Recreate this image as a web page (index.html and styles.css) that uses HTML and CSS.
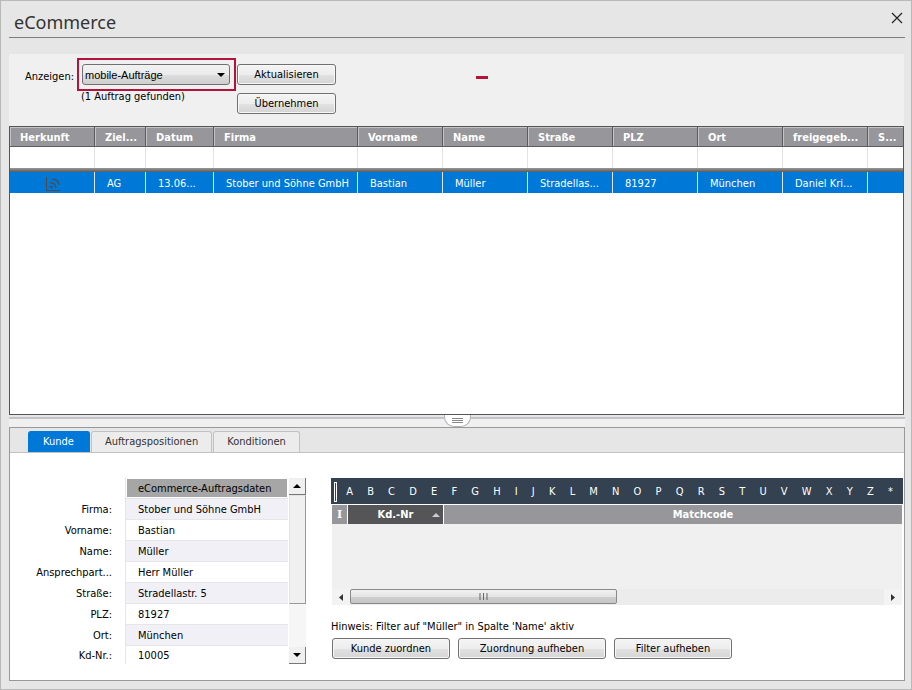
FILE: index.html
```html
<!DOCTYPE html>
<html lang="de">
<head>
    <meta charset="UTF-8">
    <meta name="viewport" content="width=device-width, initial-scale=1.0">
    <title>eCommerce</title>
    <link rel="stylesheet" href="styles.css">
</head>
<body>

    <div class="window">
        <header class="titlebar">
            <h1>eCommerce</h1>
            <button type="button" class="close-btn" aria-label="Schließen">
                <svg width="12" height="12" viewBox="0 0 12 12"><path d="M1 1L11 11M11 1L1 11" stroke="#222" stroke-width="1.2" fill="none"/></svg>
            </button>
        </header>

        <!-- Filter toolbar -->
        <div class="toolbar">
            <label class="toolbar-label" for="anzeigen">Anzeigen:</label>
            <div class="toolbar-filter">
                <div class="highlight">
                    <select id="anzeigen">
                        <option>mobile-Aufträge</option>
                    </select>
                    <svg class="select-arrow" width="8" height="4" viewBox="0 0 8 4"><path d="M0 0H8L4 4Z" fill="#000"/></svg>
                </div>
                <p class="found">(1 Auftrag gefunden)</p>
            </div>
            <div class="toolbar-buttons">
                <button type="button" class="btn">Aktualisieren</button>
                <button type="button" class="btn">Übernehmen</button>
            </div>
            <span class="dash"></span>
        </div>

        <!-- Order list -->
        <div class="orders">
            <table class="orders-table">
                <colgroup>
                    <col class="col-m"><col class="col-xs"><col class="col-s"><col class="col-l">
                    <col class="col-m"><col class="col-m"><col class="col-m"><col class="col-m">
                    <col class="col-m"><col class="col-m"><col>
                </colgroup>
                <thead>
                    <tr>
                        <th>Herkunft</th>
                        <th>Ziel...</th>
                        <th>Datum</th>
                        <th>Firma</th>
                        <th>Vorname</th>
                        <th>Name</th>
                        <th>Straße</th>
                        <th>PLZ</th>
                        <th>Ort</th>
                        <th>freigegeb...</th>
                        <th>S...</th>
                    </tr>
                </thead>
                <tbody>
                    <tr class="filter-row">
                        <td></td><td></td><td></td><td></td><td></td><td></td><td></td><td></td><td></td><td></td><td></td>
                    </tr>
                    <tr class="divider-row"><td colspan="11"></td></tr>
                    <tr class="selected">
                        <td class="icon-cell">
                            <svg width="14" height="14" viewBox="0 0 14 14" fill="none" stroke="#4b4b4b">
                                <path d="M0.5 0V13.5H14"/>
                                <path d="M6.5 2.5Q11.5 1.5 13 7.5M4 6Q9 5 10 11M3.500 10Q5.500 8.500 6.500 11.500" stroke-width="1.3"/>
                            </svg>
                        </td>
                        <td>AG</td>
                        <td>13.06...</td>
                        <td>Stober und Söhne GmbH</td>
                        <td>Bastian</td>
                        <td>Müller</td>
                        <td>Stradellas...</td>
                        <td>81927</td>
                        <td>München</td>
                        <td>Daniel Kri...</td>
                        <td></td>
                    </tr>
                </tbody>
            </table>
        </div>

        <!-- Splitter -->
        <div class="splitter">
            <div class="splitter-handle">
                <svg width="11" height="6" viewBox="0 0 11 6"><path d="M0 0.5H11M0 2.500H11M0 4.500H11" stroke="#888"/></svg>
            </div>
        </div>

        <!-- Details -->
        <div class="details">
            <div class="tabs" role="tablist">
                <button type="button" class="tab active" role="tab" aria-selected="true">Kunde</button>
                <button type="button" class="tab" role="tab" aria-selected="false">Auftragspositionen</button>
                <button type="button" class="tab" role="tab" aria-selected="false">Konditionen</button>
            </div>

            <div class="details-body">
                <div class="customer">
                    <table class="customer-table">
                        <thead>
                            <tr><td></td><th>eCommerce-Auftragsdaten</th></tr>
                        </thead>
                        <tbody>
                            <tr><th>Firma:</th><td>Stober und Söhne GmbH</td></tr>
                            <tr><th>Vorname:</th><td>Bastian</td></tr>
                            <tr><th>Name:</th><td>Müller</td></tr>
                            <tr><th>Ansprechpart...</th><td>Herr Müller</td></tr>
                            <tr><th>Straße:</th><td>Stradellastr. 5</td></tr>
                            <tr><th>PLZ:</th><td>81927</td></tr>
                            <tr><th>Ort:</th><td>München</td></tr>
                            <tr><th>Kd-Nr.:</th><td>10005</td></tr>
                        </tbody>
                    </table>
                    <div class="vscroll">
                        <button type="button" class="vscroll-btn" aria-label="Nach oben">
                            <svg width="8" height="4" viewBox="0 0 8 4"><path d="M0 4H8L4 0Z" fill="#000"/></svg>
                        </button>
                        <div class="vscroll-thumb"></div>
                        <button type="button" class="vscroll-btn" aria-label="Nach unten">
                            <svg width="8" height="4" viewBox="0 0 8 4"><path d="M0 0H8L4 4Z" fill="#000"/></svg>
                        </button>
                    </div>
                </div>

                <div class="matches">
                    <div class="alphabet">
                        <span class="grip"></span>
                        <button type="button">A</button>
                        <button type="button">B</button>
                        <button type="button">C</button>
                        <button type="button">D</button>
                        <button type="button">E</button>
                        <button type="button">F</button>
                        <button type="button">G</button>
                        <button type="button">H</button>
                        <button type="button">I</button>
                        <button type="button">J</button>
                        <button type="button">K</button>
                        <button type="button">L</button>
                        <button type="button">M</button>
                        <button type="button">N</button>
                        <button type="button">O</button>
                        <button type="button">P</button>
                        <button type="button">Q</button>
                        <button type="button">R</button>
                        <button type="button">S</button>
                        <button type="button">T</button>
                        <button type="button">U</button>
                        <button type="button">V</button>
                        <button type="button">W</button>
                        <button type="button">X</button>
                        <button type="button">Y</button>
                        <button type="button">Z</button>
                        <button type="button">*</button>
                    </div>
                    <div class="match-list">
                        <table class="match-table">
                            <thead>
                                <tr>
                                    <th class="col-mark">I</th>
                                    <th class="col-nr">Kd.-Nr
                                        <svg class="sort-arrow" width="8" height="4" viewBox="0 0 8 4"><path d="M0 4H8L4 0Z" fill="#ccc"/></svg>
                                    </th>
                                    <th class="col-matchcode">Matchcode</th>
                                </tr>
                            </thead>
                        </table>
                        <div class="hscroll">
                            <button type="button" class="hscroll-btn" aria-label="Nach links">
                                <svg width="4" height="7" viewBox="0 0 4 7"><path d="M4 0V7L0 3.500Z" fill="#333"/></svg>
                            </button>
                            <div class="hscroll-track">
                                <div class="hscroll-thumb">
                                    <svg width="9" height="7" viewBox="0 0 9 7"><path d="M1 0V7M4.500 0V7M8 0V7" stroke="#666"/></svg>
                                </div>
                            </div>
                            <button type="button" class="hscroll-btn" aria-label="Nach rechts">
                                <svg width="4" height="7" viewBox="0 0 4 7"><path d="M0 0V7L4 3.500Z" fill="#333"/></svg>
                            </button>
                        </div>
                    </div>
                    <p class="hint">Hinweis: Filter auf "Müller" in Spalte 'Name' aktiv</p>
                    <div class="actions">
                        <button type="button" class="btn">Kunde zuordnen</button>
                        <button type="button" class="btn btn-wide">Zuordnung aufheben</button>
                        <button type="button" class="btn">Filter aufheben</button>
                    </div>
                </div>
            </div>
        </div>
    </div>

</body>
</html>
```
FILE: styles.css
```css
/* Global Styles */
* {
    box-sizing: border-box;
}

body {
    margin: 0;
    font-family: "DejaVu Sans Condensed", "Noto Sans", sans-serif;
    font-size: 11px;
    line-height: 16px;
    color: #000;
}

button,
select {
    font: inherit;
    color: inherit;
}

button {
    padding: 0;
    border: none;
    background: none;
}

svg {
    display: block;
}

p {
    margin: 0;
}

.window {
    display: flex;
    flex-direction: column;
    min-height: 100vh;
    padding: 0 6px 8px 8px;
    border: 1px solid #b9b9b9;
    background-color: #e6e6e6;
}

/* Title */
.titlebar {
    display: flex;
    justify-content: space-between;
    align-items: center;
    height: 37px;
    margin-bottom: 16px;
    padding: 5px 2px 0 5px;
    border-bottom: 1px solid #7c7c7c;
}

h1 {
    margin: 0;
    font-family: "Noto Sans", "Open Sans", sans-serif;
    font-size: 18px;
    font-weight: 400;
    line-height: 24px;
    color: #333;
}

.close-btn {
    padding-bottom: 8px;
}

/* Toolbar */
.toolbar {
    display: flex;
    align-items: flex-start;
    margin-right: 1px;
    padding: 4px 0 12px 16px;
    background-color: #f0f0f0;
}

.toolbar-label {
    width: 52px;
    padding-top: 11px;
    white-space: nowrap;
}

.highlight {
    display: grid;
    width: 159px;
    padding: 4px 4px 4px 3px;
    border: 2px solid #b5123b;
}

.highlight select {
    grid-area: 1 / 1;
    height: 21px;
    padding: 0 2px;
    border: 1px solid #707070;
    border-radius: 3px;
    background: linear-gradient(#f2f2f2, #ebebeb 50%, #ddd 51%, #cfcfcf);
    font-family: "Liberation Sans", sans-serif;
    appearance: none;
}

.select-arrow {
    grid-area: 1 / 1;
    align-self: center;
    justify-self: end;
    margin-right: 5px;
    pointer-events: none;
}

.found {
    padding-left: 4px;
    line-height: 11px;
}

.toolbar-buttons {
    display: flex;
    flex-direction: column;
    gap: 8px;
    width: 99px;
    margin-left: 1px;
    padding-top: 6px;
}

.dash {
    width: 12px;
    height: 3px;
    margin: 18px 0 0 140px;
    background-color: #b5123b;
}

.btn {
    height: 21px;
    border: 1px solid #707070;
    border-radius: 3px;
    background: linear-gradient(#f4f4f4, #ededed 50%, #e2e2e2 51%, #d4d4d4);
    box-shadow: inset 0 0 0 1px #f8f8f8;
}

/* Order list */
.orders {
    flex: 1;
    margin-right: 1px;
    border: 1px solid #555;
    background-color: #fff;
}

.orders-table,
.customer-table,
.match-table {
    width: 100%;
    border-collapse: separate;
    border-spacing: 0;
    table-layout: fixed;
}

.orders-table th,
.orders-table td {
    overflow: hidden;
    text-align: left;
    white-space: nowrap;
}

.orders-table th {
    height: 20px;
    padding: 2px 0 0 10px;
    border-right: 1px solid #5c5c60;
    border-bottom: 1px solid #5c5c60;
    background-color: #96969b;
    box-shadow: inset 1px 1px 0 #c4c4c8;
    color: #fff;
}

.orders-table td {
    height: 21px;
    padding: 2px 0 0 12px;
    border-right: 1px solid #e3e3e3;
}

.orders-table th:last-child,
.orders-table td:last-child {
    border-right: none;
}

.orders-table .divider-row td {
    height: 4px;
    padding: 0;
    background: linear-gradient(#999, #5a5a5a);
}

.selected {
    background-color: #0078d7;
    color: #fff;
}

.icon-cell svg {
    margin-left: 24px;
}

.col-xs { width: 51px; }
.col-s { width: 68px; }
.col-m { width: 85px; }
.col-l { width: 144px; }

/* Splitter */
.splitter {
    display: flex;
    justify-content: center;
    height: 12px;
    background: linear-gradient(#e6e6e6 2px, #c0c0c4 2px, #c8c8cc 4px, #f0f0f0 4px);
}

.splitter-handle {
    display: flex;
    justify-content: center;
    align-items: center;
    width: 27px;
    height: 12px;
    border: 1px solid #b4b4b4;
    border-top: none;
    border-radius: 0 0 10px 10px;
    background-color: #fff;
}

/* Details */
.details {
    border: 1px solid #999;
    background-color: #fff;
}

.tabs {
    display: flex;
    gap: 1px;
    height: 25px;
    padding: 3px 0 0 18px;
    border-bottom: 1px solid #c2c2c2;
    background-color: #e6e6e6;
}

.tab {
    padding: 0 13px;
    border: 1px solid #c2c2c2;
    border-bottom: none;
    border-radius: 3px 3px 0 0;
    background-color: #ececec;
    color: #333;
}

.tab.active {
    padding: 0 15px 0 14px;
    border-color: #0078d7;
    background-color: #0078d7;
    color: #fff;
}

.details-body {
    display: flex;
    gap: 25px;
    padding: 25px 1px 16px 12px;
}

.customer {
    display: flex;
    align-self: flex-start;
    gap: 1px;
    width: 284px;
    height: 186px;
}

.customer-table th,
.customer-table td {
    height: 21px;
    padding: 2px 0 0 12px;
    border-left: 1px solid #e6e6e6;
    border-bottom: 1px solid #e6e6e6;
    font-weight: 400;
    text-align: left;
    white-space: nowrap;
}

.customer-table tr > :first-child {
    width: 103px;
    padding: 1px 13px 0 0;
    border: none;
    text-align: right;
}

.customer-table thead th {
    background-color: #a6a6a6;
    box-shadow: inset 0 0 0 1px #fff;
}

.customer-table tbody tr:nth-child(odd) td {
    background-color: #f0f0f6;
}

.customer-table tbody tr:last-child > * {
    height: 18px;
    border-bottom: none;
}

.vscroll {
    display: flex;
    flex-direction: column;
    flex: none;
    width: 17px;
    background-color: #f6f6f6;
}

.vscroll-btn {
    display: flex;
    justify-content: center;
    align-items: center;
    height: 17px;
    border-right: 1px solid #777;
    border-bottom: 1px solid #777;
    background-color: #f0f0f0;
}

.vscroll-btn:last-child {
    margin-top: auto;
}

.vscroll-thumb {
    height: 109px;
    border: 1px solid #e3e3e3;
    border-right-color: #999;
    border-bottom-color: #999;
    background-color: #f0f0f0;
}

/* Customer search */
.matches {
    flex: 1;
    min-width: 0;
}

.alphabet {
    display: flex;
    justify-content: space-between;
    align-items: center;
    height: 26px;
    padding: 1px 10px 0 3px;
    background-color: #334150;
    color: #fff;
}

.grip {
    width: 3px;
    height: 20px;
    margin-right: -5px;
    border: 1px solid #fff;
}

.match-list {
    display: flex;
    flex-direction: column;
    height: 100px;
    margin: 1px 1px 14px 1px;
    background-color: #f0f0f0;
}

.match-table th {
    height: 19px;
    padding: 1px 0 0;
    background-color: #96969b;
    color: #fff;
}

.match-table .col-mark {
    width: 16px;
    border-right: 1px solid #fff;
    font-family: "DejaVu Serif", serif;
}

.match-table .col-nr {
    position: relative;
    width: 96px;
    border-right: 1px solid #fff;
    background-color: #555558;
}

.match-table .col-matchcode {
    padding-left: 60px;
}

.sort-arrow {
    position: absolute;
    top: 8px;
    right: 3px;
}

.hscroll {
    display: flex;
    height: 16px;
    margin-top: auto;
    background-color: #ececec;
}

.hscroll-btn {
    display: flex;
    justify-content: center;
    align-items: center;
    width: 18px;
    background-color: #f3f3f3;
}

.hscroll-track {
    flex: 1;
}

.hscroll-thumb {
    display: flex;
    justify-content: center;
    align-items: center;
    width: 50%;
    height: 15px;
    border: 1px solid #8a8a8a;
    border-radius: 2px;
    background: linear-gradient(#f2f2f2, #e4e4e4 50%, #cfcfcf 51%, #c6c6c6);
}

.hint {
    margin-bottom: 3px;
}

.actions {
    display: flex;
    gap: 8px;
    padding-left: 1px;
}

.actions .btn {
    width: 118px;
}

.actions .btn-wide {
    width: 148px;
}
```
